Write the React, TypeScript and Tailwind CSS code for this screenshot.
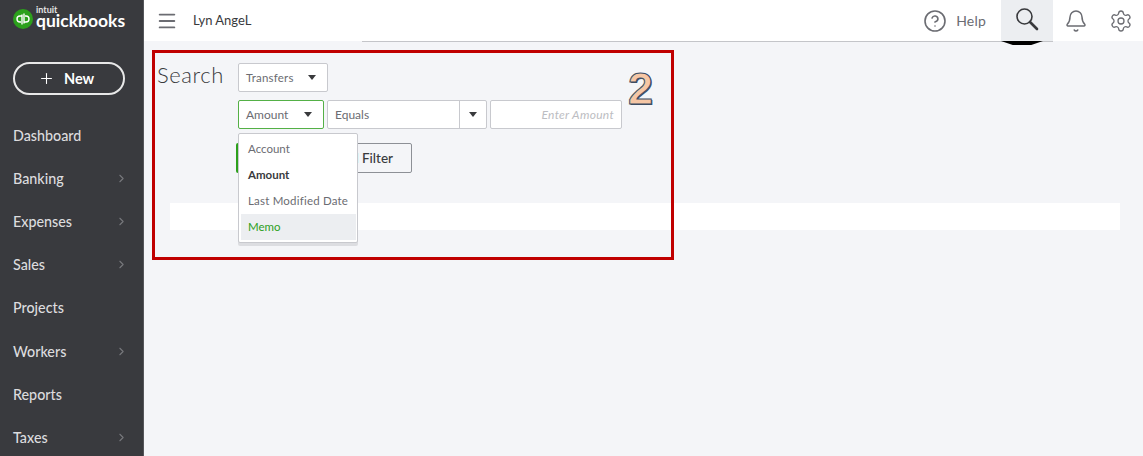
import { Menu, Plus, ChevronRight, Bell, Settings, CircleHelp } from "lucide-react";

const nav = [
  ["Dashboard", false],
  ["Banking", true],
  ["Expenses", true],
  ["Sales", true],
  ["Projects", false],
  ["Workers", true],
  ["Reports", false],
  ["Taxes", true],
] as const;

function Caret() {
  return <span className="w-0 h-0 border-l-[4px] border-r-[4px] border-t-[5px] border-l-transparent border-r-transparent border-t-[#393a3d]" />;
}

export default function App() {
  return (
    <div className="flex w-[1143px] h-[456px] overflow-hidden bg-[#f4f5f8] text-[#393a3d] font-['Lato','Noto_Sans',sans-serif]">
      <aside className="w-[144px] shrink-0 bg-[#393a3e] border-r border-[#55565a] flex flex-col text-[#dcdcde]">
        <div className="h-[41px] shrink-0 pl-[13px] pt-[7px] flex items-start gap-[2px]">
          <svg width="20" height="20" viewBox="0 0 20 20" className="mt-[2px]">
            <circle cx="10" cy="10" r="10" fill="#2ca01c" />
            <path d="M9 7H7a3 3 0 0 0 0 6h1M9 5.5V15.5M11 13h2a3 3 0 0 0 0-6h-1M11 4.5V14.5" fill="none" stroke="#fff" strokeWidth="1.4" />
          </svg>
          <div className="flex flex-col ml-[1px] -mt-[1px]">
            <span className="text-[9px] leading-[7px] font-bold text-[#e4e4e4]">intuit</span>
            <span className="text-[17.5px] leading-[16px] font-bold text-white">quickbooks</span>
          </div>
        </div>
        <div className="shrink-0 mt-[21px] ml-[13px] w-[112px] h-[33px] rounded-full border-2 border-[#e8e8e8] flex items-center pl-[23px] gap-[9px] text-white text-[14.5px] font-bold">
          <Plus size={17} strokeWidth={1.5} />
          <span>New</span>
        </div>
        <nav className="shrink-0 mt-[19px] flex flex-col">
          {nav.map(([label, arrow]) => (
            <div key={label} className="h-[43.15px] shrink-0 pl-[13px] pr-[15px] flex items-center justify-between text-[14.3px] font-medium">
              <span>{label}</span>
              {arrow && <ChevronRight size={13} strokeWidth={2} className="text-[#77787c]" />}
            </div>
          ))}
        </nav>
      </aside>

      <main className="relative flex-1 min-w-0">
        <header className="relative h-[41px] bg-white flex items-center">
          <Menu size={22} strokeWidth={2} className="ml-[12px] text-[#6b6c72]" />
          <span className="ml-[15px] text-[13px]">Lyn AngeL</span>
          <span className="absolute left-[218px] right-[142px] top-[41px] h-px bg-[#c4c5c9]" />
          <div className="flex-1" />
          <div className="flex items-center text-[#6b6c72] pr-[15px]">
            <CircleHelp size={24} strokeWidth={1.6} />
            <span className="ml-[9px] text-[14px] tracking-[0.2px]">Help</span>
          </div>
          <div className="h-[42px] w-[52px] self-start bg-[#eceef1] border-b border-[#c4c5c9] flex items-center justify-center text-[#393a3d] relative shrink-0">
            <svg width="24" height="24" viewBox="0 0 24 24" fill="none" stroke="currentColor" className="-mt-[3px]">
              <circle cx="9.5" cy="9.5" r="7.5" strokeWidth="1.6" />
              <path d="M15 15l7 7" strokeWidth="2.6" strokeLinecap="round" />
            </svg>
            <span className="absolute left-0 top-[41px] w-[42px] h-[4px] bg-black [clip-path:polygon(0_0,100%_0,72%_100%,28%_100%)]" />
          </div>
          <div className="w-[45px] flex justify-center text-[#6b6c72] shrink-0"><Bell size={24} strokeWidth={1.5} /></div>
          <div className="w-[45px] flex justify-center text-[#6b6c72] shrink-0"><Settings size={24} strokeWidth={1.3} /></div>
        </header>

        <section className="pt-[22px] pl-[13px]">
          <div className="flex items-start">
            <h1 className="text-[22px] leading-[28px] w-[81px] font-light tracking-[0.6px] -mt-[2px]">Search</h1>
            <div className="flex flex-col">
              <button className="w-[90px] h-[29px] bg-white border border-[#c8c9ce] rounded-[2px] flex items-center justify-between pl-[7px] pr-[11px] text-[11.5px] tracking-[0.2px] text-[#6b6c72]">
                <span>Transfers</span><Caret />
              </button>
              <div className="mt-[8px] flex gap-[3px]">
                <button className="w-[86px] h-[29px] bg-white border border-[#54b046] rounded-[2px] flex items-center justify-between pl-[7px] pr-[11px] text-[12px] text-[#6b6c72]">
                  <span>Amount</span><Caret />
                </button>
                <div className="w-[160px] h-[29px] bg-white border border-[#c8c9ce] rounded-[2px] flex items-center text-[12px] text-[#6b6c72]">
                  <span className="flex-1 pl-[7px]">Equals</span>
                  <span className="w-[27px] h-full border-l border-[#c8c9ce] flex items-center justify-center"><Caret /></span>
                </div>
                <div className="w-[132px] h-[29px] bg-white border border-[#c8c9ce] rounded-[2px] flex items-center justify-end pr-[7px] text-[12px] tracking-[0.3px] italic text-[#bcbdc2]">
                  Enter Amount
                </div>
              </div>
              <div className="relative mt-[14px] h-[31px] flex">
                <div className="w-[12px] h-[30px] -ml-[2px] bg-[#2ca01c] rounded-l-[2px]" />
                <div className="ml-[34px] w-[130px] h-[30px] bg-[#f4f5f8] border border-[#8d9096] rounded-[2px] flex items-center justify-end pr-[18px] text-[13.5px] font-medium whitespace-nowrap">
                  Add Filter
                </div>
                <div className="absolute left-0 -top-[10px] w-[120px] h-[110px] bg-white border border-[#c8c9ce] rounded-[2px] shadow-[0_3px_0_#dcdde1] py-[2px] z-10 text-[11.5px] text-[#6b6c72]">
                  <div className="h-[26px] pl-[9px] flex items-center">Account</div>
                  <div className="h-[26px] pl-[9px] flex items-center font-bold text-[#393a3d]">Amount</div>
                  <div className="h-[26px] pl-[9px] flex items-center whitespace-nowrap tracking-[0.2px]">Last Modified Date</div>
                  <div className="h-[26px] ml-[2px] mr-[1px] pl-[7px] flex items-center bg-[#eceef1] text-[#2ca01c]">Memo</div>
                </div>
              </div>
            </div>
          </div>
          <div className="mt-[29px] ml-[13px] w-[950px] h-[27px] bg-white" />
        </section>

        <div className="absolute left-[8px] top-[50px] w-[522px] h-[210px] border-[3px] border-[#c00000] pointer-events-none" />
        <span className="absolute left-[484px] top-[62px] text-[45px] leading-[54px] font-bold font-['Liberation_Sans',sans-serif] text-[#f5c6a5] [-webkit-text-stroke:1px_#3d4d63] [text-shadow:1px_1px_0_#3d4d63]">2</span>
      </main>
    </div>
  );
}
